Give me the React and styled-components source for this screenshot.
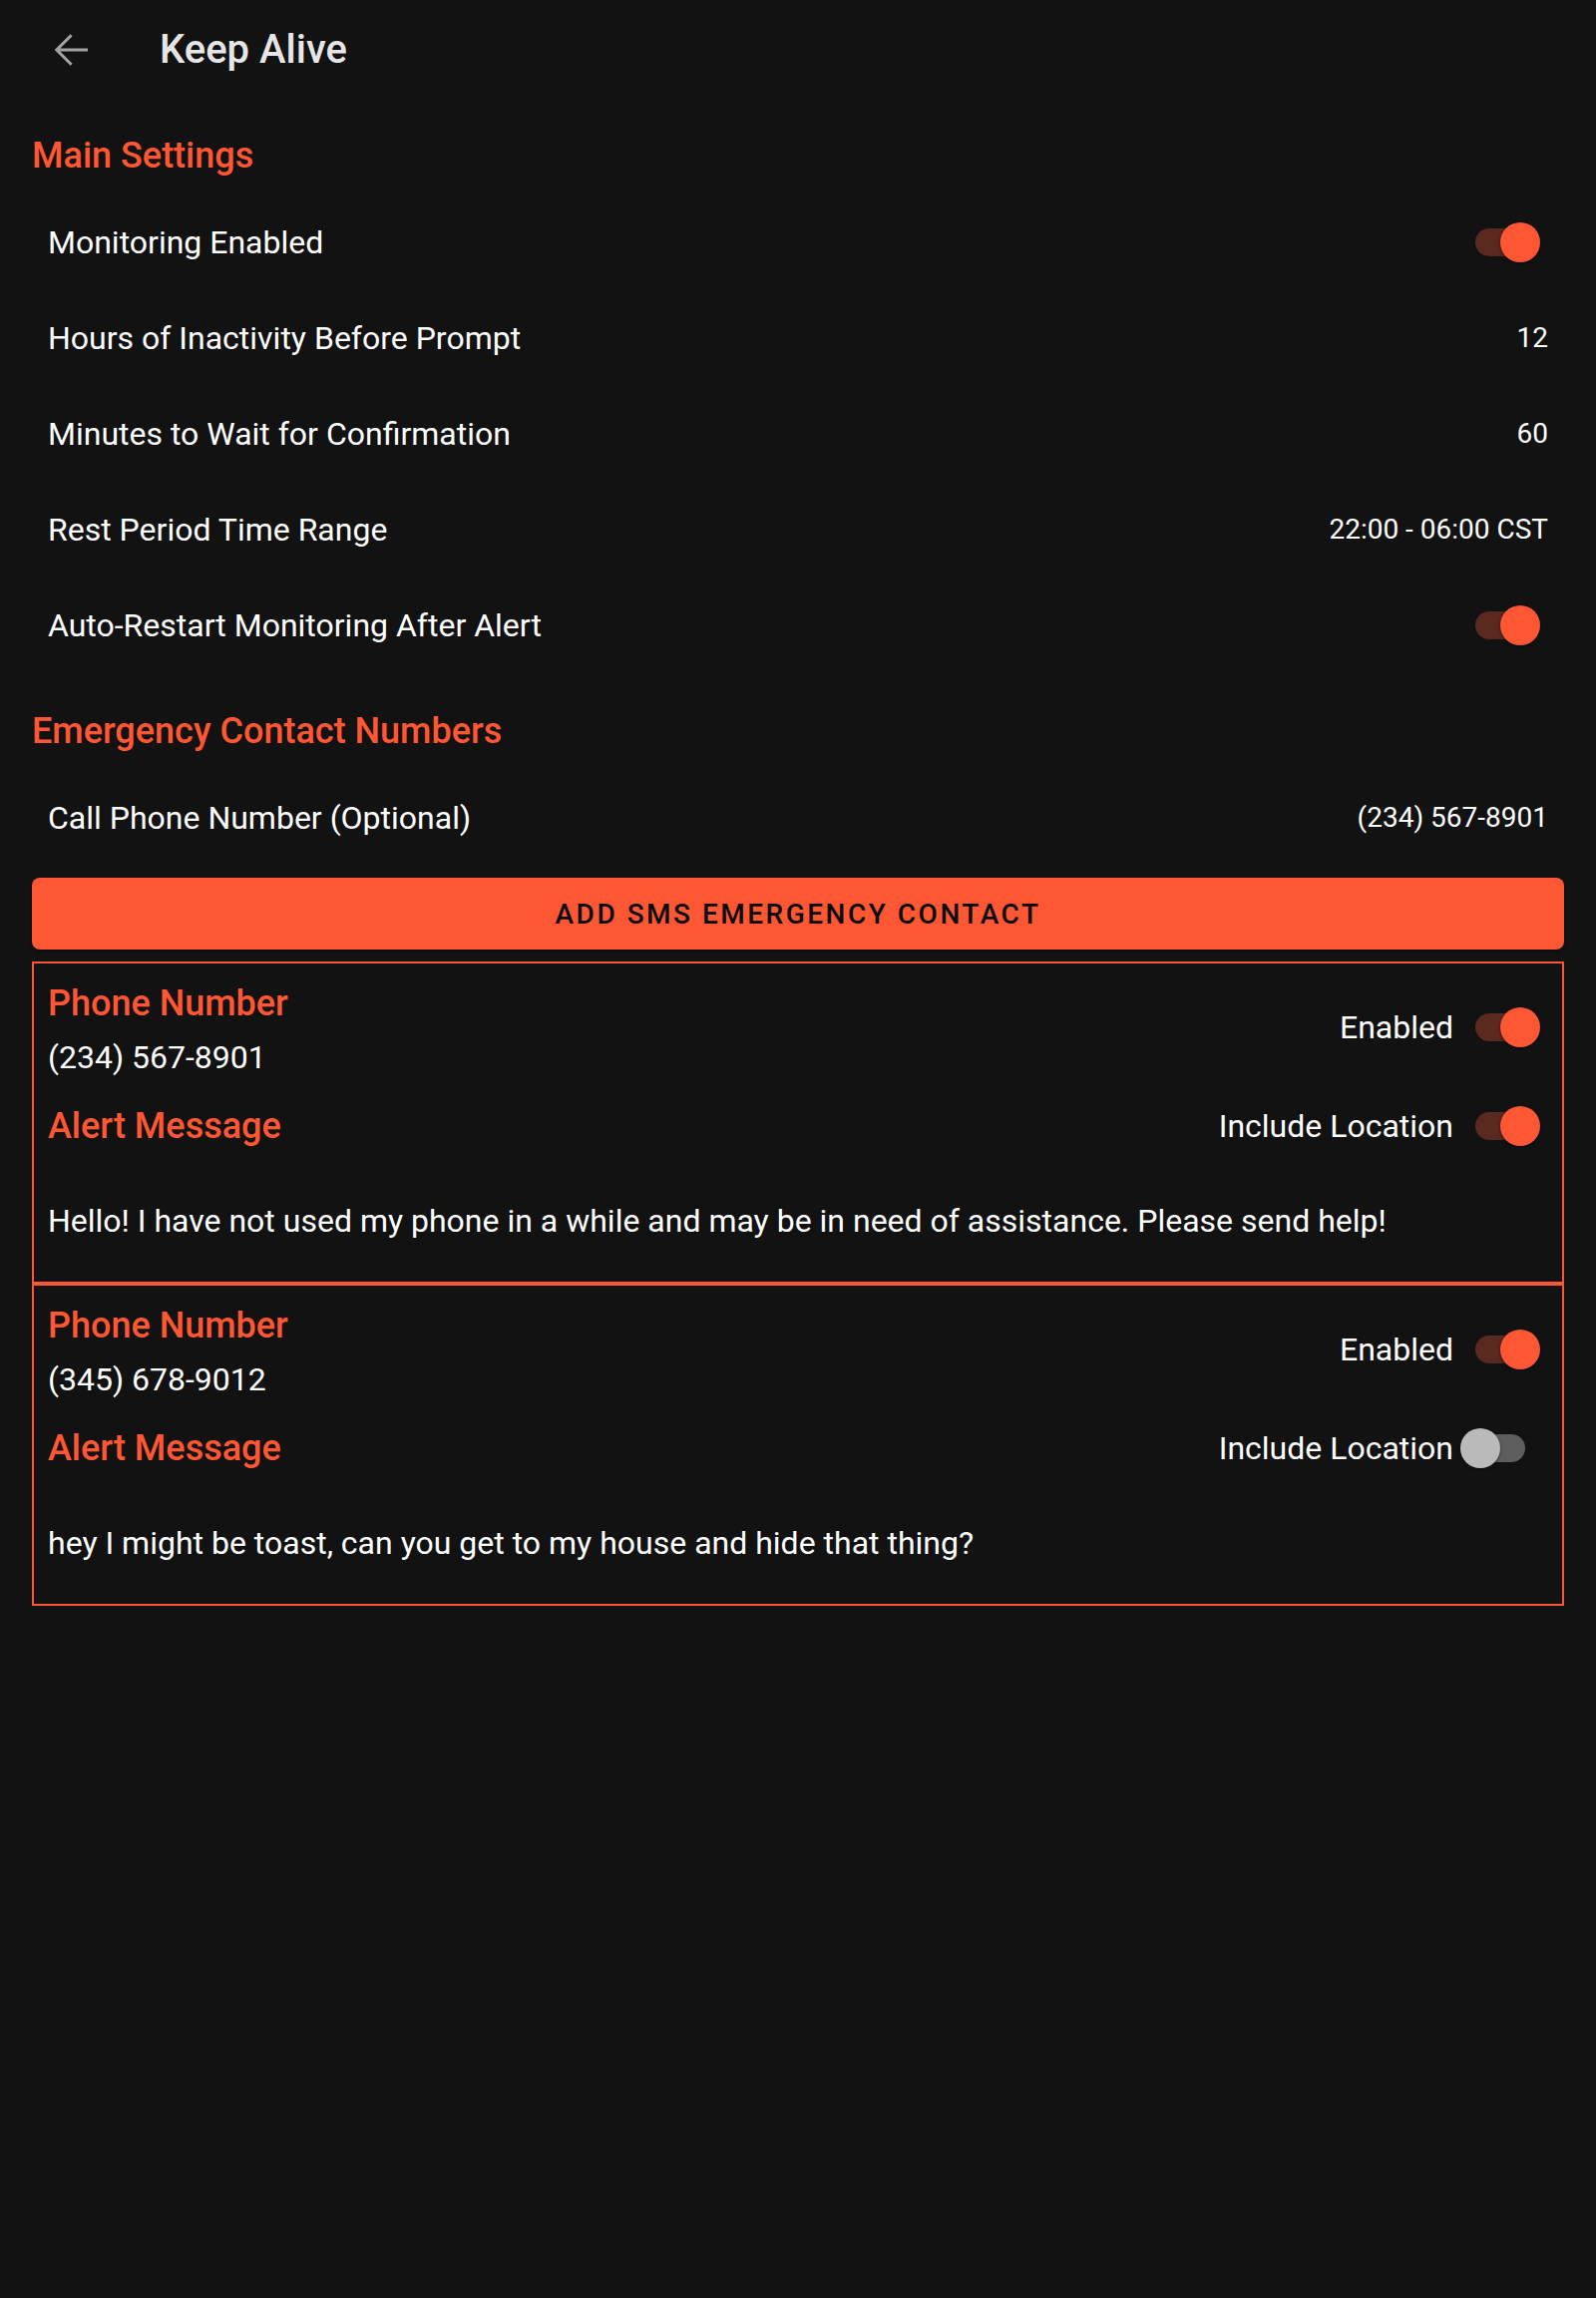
import React from "react";
import styled, { createGlobalStyle } from "styled-components";

const orange = "#ff5733";

const GlobalStyle = createGlobalStyle`
  html, body {
    margin: 0;
    padding: 0;
    background: #121212;
  }
  body {
    font-family: Roboto, "Noto Sans", "Liberation Sans", sans-serif;
    color: #ffffff;
  }
  * {
    box-sizing: border-box;
  }
`;

const Page = styled.div`
  min-height: 100vh;
  background: #121212;
`;

const Toolbar = styled.header`
  height: 98px;
  padding-top: 2px;
  display: flex;
  align-items: center;
  padding-left: 48px;
`;

const BackButton = styled.button`
  width: 48px;
  height: 48px;
  padding: 0;
  border: none;
  background: transparent;
  display: flex;
  align-items: center;
  justify-content: center;
  color: #a3a3a3;
`;

const Title = styled.h1`
  margin: 0 0 0 64px;
  font-size: 40px;
  font-weight: 500;
  line-height: 48px;
  color: #e6e6e6;
`;

const Content = styled.main`
  padding: 0 32px;
`;

const SectionTitle = styled.h2`
  margin: 36px 0 17px;
  font-size: 36px;
  font-weight: 500;
  line-height: 44px;
  color: ${orange};
`;

const SettingsList = styled.div`
  padding: 0 16px;
`;

const Row = styled.div`
  height: 96px;
  display: flex;
  align-items: center;
  justify-content: space-between;
`;

const Label = styled.span`
  font-size: 32px;
  line-height: 48px;
  color: #ffffff;
`;

const Value = styled.span`
  font-size: 28px;
  line-height: 40px;
  color: #ffffff;
`;

const SwitchBox = styled.span`
  position: relative;
  display: inline-block;
  flex-shrink: 0;
  width: 88px;
  height: 40px;
`;

const Track = styled.span`
  position: absolute;
  left: 15px;
  top: 6px;
  width: 50px;
  height: 28px;
  border-radius: 14px;
  background: ${(p) => (p.on ? "#5a291f" : "#5e5e5e")};
`;

const Thumb = styled.span`
  position: absolute;
  top: 0;
  left: ${(p) => (p.on ? "40px" : "0")};
  width: 40px;
  height: 40px;
  border-radius: 50%;
  background: ${(p) => (p.on ? orange : "#bababa")};
  box-shadow: 0 1px 3px rgba(0, 0, 0, 0.55);
`;

const Switch = ({ on }) => (
  <SwitchBox role="switch" aria-checked={on}>
    <Track on={on} />
    <Thumb on={on} />
  </SwitchBox>
);

const AddButton = styled.button`
  display: block;
  width: 100%;
  height: 72px;
  margin-top: 12px;
  border: none;
  border-radius: 8px;
  background: ${orange};
  color: #0a0a0a;
  font-family: Roboto, "Noto Sans", sans-serif;
  font-size: 28px;
  font-weight: 500;
  letter-spacing: 2.5px;
  text-transform: uppercase;
  box-shadow: 0 2px 3px rgba(0, 0, 0, 0.4);
`;

const Cards = styled.div`
  margin-top: 12px;
`;

const Card = styled.section`
  border: 2px solid ${orange};
  padding: 18px 14px 37px;
`;

const TopRow = styled.div`
  display: flex;
  align-items: center;
  justify-content: space-between;
`;

const LeftCol = styled.div`
  display: flex;
  flex-direction: column;
`;

const CardTitle = styled.h3`
  margin: 0;
  font-size: 36px;
  font-weight: 500;
  line-height: 44px;
  color: ${orange};
`;

const Number = styled.span`
  margin-top: 8px;
  font-size: 32px;
  line-height: 48px;
`;

const SwitchGroup = styled.div`
  display: flex;
  align-items: center;
  gap: 7px;
  margin-bottom: ${(p) => p.lift || 0}px;
`;

const AlertRow = styled.div`
  margin-top: 17px;
  height: 56px;
  display: flex;
  align-items: center;
  justify-content: space-between;
`;

const Message = styled.p`
  margin: 43px 0 0;
  font-size: 32px;
  line-height: 48px;
`;

const ArrowBack = () => (
  <svg width="48" height="48" viewBox="0 0 24 24" fill="none">
    <path
      d="M20 12H4.6M11.8 4.6L4.4 12l7.4 7.4"
      stroke="currentColor"
      strokeWidth="1.5"
    />
  </svg>
);

const settings = [
  { label: "Monitoring Enabled", toggle: true },
  { label: "Hours of Inactivity Before Prompt", value: "12" },
  { label: "Minutes to Wait for Confirmation", value: "60" },
  { label: "Rest Period Time Range", value: "22:00 - 06:00 CST" },
  { label: "Auto-Restart Monitoring After Alert", toggle: true },
];

const contacts = [
  {
    phone: "(234) 567-8901",
    enabled: true,
    location: true,
    message:
      "Hello! I have not used my phone in a while and may be in need of assistance. Please send help!",
  },
  {
    phone: "(345) 678-9012",
    enabled: true,
    location: false,
    message: "hey I might be toast, can you get to my house and hide that thing?",
  },
];

const App = () => (
  <Page>
    <GlobalStyle />
    <Toolbar>
      <BackButton aria-label="Back">
        <ArrowBack />
      </BackButton>
      <Title>Keep Alive</Title>
    </Toolbar>
    <Content>
      <SectionTitle>Main Settings</SectionTitle>
      <SettingsList>
        {settings.map((s) => (
          <Row key={s.label}>
            <Label>{s.label}</Label>
            {s.toggle ? <Switch on /> : <Value>{s.value}</Value>}
          </Row>
        ))}
      </SettingsList>

      <SectionTitle>Emergency Contact Numbers</SectionTitle>
      <SettingsList>
        <Row>
          <Label>Call Phone Number (Optional)</Label>
          <Value>(234) 567-8901</Value>
        </Row>
      </SettingsList>

      <AddButton>Add SMS Emergency Contact</AddButton>

      <Cards>
        {contacts.map((c) => (
          <Card key={c.phone}>
            <TopRow>
              <LeftCol>
                <CardTitle>Phone Number</CardTitle>
                <Number>{c.phone}</Number>
              </LeftCol>
              <SwitchGroup lift={8}>
                <Label>Enabled</Label>
                <Switch on={c.enabled} />
              </SwitchGroup>
            </TopRow>
            <AlertRow>
              <CardTitle>Alert Message</CardTitle>
              <SwitchGroup>
                <Label>Include Location</Label>
                <Switch on={c.location} />
              </SwitchGroup>
            </AlertRow>
            <Message>{c.message}</Message>
          </Card>
        ))}
      </Cards>
    </Content>
  </Page>
);

export default App;
